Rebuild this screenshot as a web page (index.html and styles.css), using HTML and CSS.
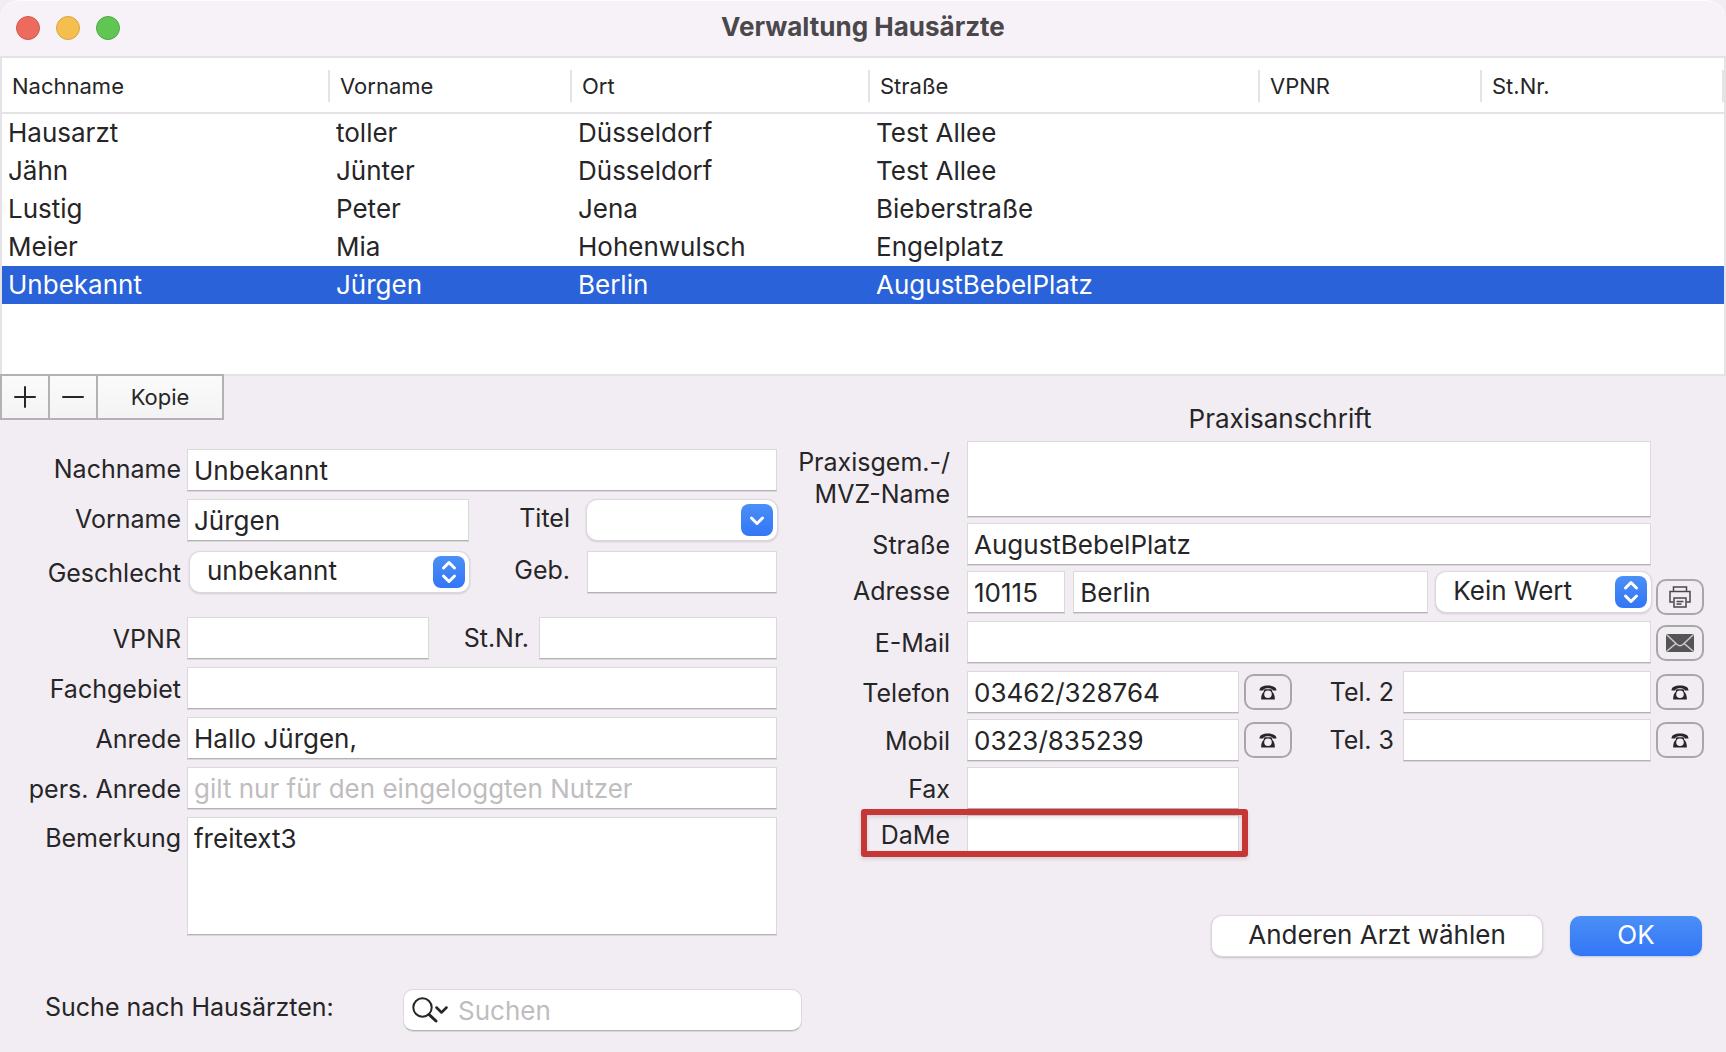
FILE: index.html
```html
<!DOCTYPE html>
<html lang="de">
<head>
<meta charset="utf-8">
<meta name="viewport" content="width=device-width, initial-scale=1">
<title>Verwaltung Hausärzte</title>
<link rel="stylesheet" href="styles.css">
</head>
<body>
<svg class="sprite" aria-hidden="true">
  <symbol id="phone" viewBox="0 0 18 15">
    <path d="M0.500 5.500C0.500 2 4 .6 9 .6s8.500 1.400 8.500 4.900h-4V4.600C12.600 3.500 11 3.200 9 3.200s-3.600.3-4.500 1.400v.9h-4z" fill="currentColor"/>
    <path fill-rule="evenodd" d="M5.300 4.200h7.400l.4 2.200c1.500 1.400 2.400 3.400 2.700 6v2.200H2.200v-2.200c.3-2.600 1.200-4.600 2.700-6zM9 5.500a3.800 3.800 0 1 0 0 7.600 3.800 3.800 0 0 0 0-7.600z" fill="currentColor"/>
  </symbol>
  <symbol id="updown" viewBox="0 0 32 32">
    <path d="M10.500 12l5.500-5.500 5.500 5.500M10.500 20l5.500 5.500 5.500-5.500" fill="none" stroke="#fff" stroke-width="3" stroke-linecap="round" stroke-linejoin="round"/>
  </symbol>
  <symbol id="down" viewBox="0 0 32 32">
    <path d="M10.500 14l5.500 5.500 5.500-5.500" fill="none" stroke="#fff" stroke-width="3" stroke-linecap="round" stroke-linejoin="round"/>
  </symbol>
</svg>
<div class="window">
  <header class="titlebar">
    <div class="lights">
      <button class="light light-close" type="button" aria-label="Schließen"></button>
      <button class="light light-min" type="button" aria-label="Minimieren"></button>
      <button class="light light-max" type="button" aria-label="Maximieren"></button>
    </div>
    <h1 class="title">Verwaltung Hausärzte</h1>
  </header>

  <div class="list">
    <table class="doctors">
      <colgroup><col class="c1"><col class="c2"><col class="c3"><col class="c4"><col class="c5"><col class="c6"></colgroup>
      <thead>
        <tr>
          <th scope="col"><span>Nachname</span></th>
          <th scope="col"><span>Vorname</span></th>
          <th scope="col"><span>Ort</span></th>
          <th scope="col"><span>Straße</span></th>
          <th scope="col"><span>VPNR</span></th>
          <th scope="col"><span>St.Nr.</span></th>
        </tr>
      </thead>
      <tbody>
        <tr><td>Hausarzt</td><td>toller</td><td>Düsseldorf</td><td>Test Allee</td><td></td><td></td></tr>
        <tr><td>Jähn</td><td>Jünter</td><td>Düsseldorf</td><td>Test Allee</td><td></td><td></td></tr>
        <tr><td>Lustig</td><td>Peter</td><td>Jena</td><td>Bieberstraße</td><td></td><td></td></tr>
        <tr><td>Meier</td><td>Mia</td><td>Hohenwulsch</td><td>Engelplatz</td><td></td><td></td></tr>
        <tr class="selected"><td>Unbekannt</td><td>Jürgen</td><td>Berlin</td><td>AugustBebelPlatz</td><td></td><td></td></tr>
      </tbody>
    </table>
  </div>

  <main class="panels">
    <section class="panel-left">
      <div class="toolbar">
        <button class="tool" type="button" aria-label="Hinzufügen"><svg width="22" height="22" viewBox="0 0 22 22"><path d="M11 1v20M1 11h20" stroke="currentColor" stroke-width="2" stroke-linecap="round"/></svg></button>
        <button class="tool" type="button" aria-label="Entfernen"><svg width="22" height="22" viewBox="0 0 22 22"><path d="M1 11h20" stroke="currentColor" stroke-width="2" stroke-linecap="round"/></svg></button>
        <button class="tool tool-wide" type="button">Kopie</button>
      </div>

      <form class="person">
        <label class="label raised" for="nachname">Nachname</label>
        <input class="field" id="nachname" value="Unbekannt">

        <label class="label raised" for="vorname">Vorname</label>
        <div class="line">
          <input class="field" id="vorname" value="Jürgen">
          <label class="label raised" for="titel">Titel</label>
          <div class="select">
            <select id="titel"><option></option></select>
            <svg class="knob"><use href="#down"/></svg>
          </div>
        </div>

        <label class="label" for="geschlecht">Geschlecht</label>
        <div class="line">
          <div class="select popup">
            <select id="geschlecht"><option>unbekannt</option></select>
            <svg class="knob"><use href="#updown"/></svg>
          </div>
          <label class="label raised" for="geb">Geb.</label>
          <input class="field" id="geb">
        </div>

        <label class="label" for="vpnr">VPNR</label>
        <div class="line ids">
          <input class="field" id="vpnr">
          <label class="label" for="stnr">St.Nr.</label>
          <input class="field" id="stnr">
        </div>

        <label class="label" for="fach">Fachgebiet</label>
        <input class="field" id="fach">

        <label class="label" for="anrede">Anrede</label>
        <input class="field" id="anrede" value="Hallo Jürgen,">

        <label class="label" for="pers">pers. Anrede</label>
        <input class="field" id="pers" placeholder="gilt nur für den eingeloggten Nutzer">

        <label class="label top" for="bem">Bemerkung</label>
        <textarea class="field" id="bem">freitext3</textarea>
      </form>

      <form class="search" role="search">
        <label class="search-label" for="suche">Suche nach Hausärzten:</label>
        <div class="searchbox">
          <svg class="glass" viewBox="0 0 36 26"><circle cx="10.500" cy="10.500" r="9.200" fill="none" stroke="currentColor" stroke-width="2"/><path d="M17 17.500l7 6.500" stroke="currentColor" stroke-width="3" stroke-linecap="round"/><path d="M24.500 10.500l5 5 5-5" fill="none" stroke="currentColor" stroke-width="2.500" stroke-linecap="round" stroke-linejoin="round"/></svg>
          <input id="suche" type="search" placeholder="Suchen">
        </div>
      </form>
    </section>

    <section class="panel-right">
      <h2 class="heading">Praxisanschrift</h2>
      <form class="address">
        <label class="label top" for="praxis">Praxisgem.-/<br>MVZ-Name</label>
        <textarea class="field" id="praxis"></textarea>

        <label class="label" for="strasse">Straße</label>
        <input class="field" id="strasse" value="AugustBebelPlatz">

        <label class="label raised" for="plz">Adresse</label>
        <div class="line place">
          <input class="field" id="plz" value="10115">
          <input class="field" id="ort" value="Berlin" aria-label="Ort">
          <div class="select">
            <select id="wert" aria-label="Wert"><option>Kein Wert</option></select>
            <svg class="knob"><use href="#updown"/></svg>
          </div>
        </div>
        <button class="icon low" type="button" aria-label="Drucken"><svg width="22" height="22" viewBox="0 0 22 22" fill="none" stroke="#4a484b" stroke-width="1.500"><path d="M4.500 5V1h13v4M4.500 16H1V5.500h20V16h-3.500"/><path d="M5 12h12v9H5zM7.500 15.500h7M7.500 18h5"/></svg></button>

        <label class="label" for="mail">E-Mail</label>
        <input class="field" id="mail">
        <button class="icon" type="button" aria-label="E-Mail senden"><svg width="28" height="18" viewBox="0 0 28 18"><rect width="28" height="18" rx="2" fill="#555556"/><path d="M1 1l10 9.500q3 2.500 6 0L27 1M1 17l9.500-8M27 17l-9.500-8" fill="none" stroke="#cfccd0" stroke-width="1.500"/></svg></button>

        <label class="label" for="tel">Telefon</label>
        <div class="line phones">
          <input class="field" id="tel" value="03462/328764">
          <button class="icon" type="button" aria-label="Telefon anrufen"><svg class="phone"><use href="#phone"/></svg></button>
          <label class="label" for="tel2">Tel. 2</label>
          <input class="field" id="tel2">
        </div>
        <button class="icon" type="button" aria-label="Tel. 2 anrufen"><svg class="phone"><use href="#phone"/></svg></button>

        <label class="label" for="mobil">Mobil</label>
        <div class="line phones">
          <input class="field" id="mobil" value="0323/835239">
          <button class="icon" type="button" aria-label="Mobil anrufen"><svg class="phone"><use href="#phone"/></svg></button>
          <label class="label" for="tel3">Tel. 3</label>
          <input class="field" id="tel3">
        </div>
        <button class="icon" type="button" aria-label="Tel. 3 anrufen"><svg class="phone"><use href="#phone"/></svg></button>

        <label class="label" for="fax">Fax</label>
        <div class="line phones"><input class="field" id="fax"></div>

        <label class="label raised" for="dame">DaMe</label>
        <div class="line phones marked"><input class="field" id="dame"><span class="callout"></span></div>
      </form>
      <div class="actions">
        <button class="push" type="button">Anderen Arzt wählen</button>
        <button class="push primary" type="button">OK</button>
      </div>
    </section>
  </main>
</div>
</body>
</html>
```
FILE: styles.css
```css
* { box-sizing: border-box; }

body {
  margin: 0;
  background: #f2edf3;
  color: #262527;
  font: 26px/32px Inter, "Liberation Sans", sans-serif;
}

button, input, select, textarea { font: inherit; color: inherit; margin: 0; }
.sprite { display: none; }

.window { min-height: 100vh; display: flex; flex-direction: column; }

/* Title bar */
.titlebar {
  display: grid;
  grid-template-columns: 1fr auto 1fr;
  align-items: center;
  height: 58px;
  padding: 0 16px;
  background: #f7f2f8;
  border-bottom: 2px solid #e5e3e5;
  border-radius: 20px 20px 0 0;
  box-shadow: inset 0 1px #fdfbfd;
}
.lights { display: flex; gap: 16px; }
.light { width: 24px; height: 24px; padding: 0; border: 1px solid; border-radius: 50%; }
.light-close { background: #ec6a5e; border-color: #d5574c; }
.light-min { background: #f5bf4f; border-color: #d9a441; }
.light-max { background: #61c554; border-color: #50a945; }
.title { margin: 0; padding-bottom: 2px; font-size: 26px; font-weight: 700; color: #4b484c; }

/* Doctor list */
.list {
  min-height: 318px;
  background: #fff;
  border: 2px solid #e5e3e5;
  border-top: 0;
}
.doctors { width: 100%; border-collapse: separate; border-spacing: 0; table-layout: fixed; }
.c1 { width: 328px; }
.c2 { width: 242px; }
.c3 { width: 298px; }
.c4 { width: 390px; }
.c5 { width: 222px; }
.c6 { width: 242px; }
.doctors th {
  height: 56px;
  padding: 2px 0 0;
  border-bottom: 2px solid #e5e3e5;
  font-size: 22px;
  font-weight: 400;
  text-align: left;
}
.doctors th span { display: block; padding-left: 10px; border-right: 2px solid #e5e3e5; }
.doctors td { height: 38px; padding: 0 6px; white-space: nowrap; }
.selected { background: #2962d9; color: #fff; }

/* Form panels */
.panels {
  display: grid;
  grid-template-columns: minmax(0, 777fr) minmax(0, 908fr);
  gap: 19px;
  padding-right: 22px;
}

.toolbar { display: flex; margin-top: -2px; }
.tool {
  display: flex;
  align-items: center;
  justify-content: center;
  width: 50px;
  height: 46px;
  padding: 0;
  border: 2px solid #b3b1b4;
  background: linear-gradient(#fbfbfb, #f3f3f3);
  font-size: 22px;
}
.tool + .tool { margin-left: -2px; }
.tool-wide { width: 128px; }

.person, .address { display: grid; align-items: start; }
.person {
  grid-template-columns: 181px minmax(0, 1fr);
  grid-template-rows: 42px 44px 58px 42px 42px 42px 42px 118px;
  gap: 8px 6px;
  margin-top: 29px;
}
.label { font-size: 25px; text-align: right; white-space: nowrap; line-height: 44px; }
.raised { padding-bottom: 4px; line-height: 40px; }
.top { padding-top: 5px; line-height: 32px; }

.field {
  width: 100%;
  min-width: 0;
  height: 42px;
  padding: 0 6px;
  border: 1px solid #dcd9dd;
  border-bottom-color: #b3b1b4;
  border-radius: 0;
  background: #fff;
  box-shadow: 0 1px #dad7db;
  outline: 0;
}
textarea.field { display: block; height: 100%; padding-top: 5px; resize: none; }
::placeholder { color: #bfbdc0; opacity: 1; }

.line { display: grid; grid-template-columns: 282fr 100fr 190fr; grid-template-rows: 42px; align-items: center; column-gap: 9px; }
.line .label { padding-right: 8px; }
.ids { grid-template-columns: 242fr 98fr 238fr; column-gap: 6px; }
.line.ids .label, .line.phones .label { padding-right: 4px; }

.select { position: relative; }
.select select {
  display: block;
  width: 100%;
  height: 40px;
  padding: 0 40px 3px 17px;
  border: 0;
  border-radius: 10px;
  appearance: none;
  background: #fff;
  box-shadow: 0 0 1px 1px #dcd9dd, 0 1px 2px 1px #cfccd0;
}
.popup { margin-left: 3px; }
.knob {
  position: absolute;
  top: 4px;
  right: 4px;
  width: 32px;
  height: 32px;
  border-radius: 8px;
  background: linear-gradient(#4b8ff7, #3276f6);
  pointer-events: none;
}

/* Search */
.search { display: grid; grid-template-columns: 358px 399px; align-items: center; margin: 54px 0 20px 45px; }
.search-label { padding-bottom: 6px; font-size: 25px; }
.searchbox { position: relative; }
.searchbox input {
  display: block;
  width: 100%;
  height: 42px;
  padding: 0 10px 0 54px;
  border: 1px solid #dcd9dd;
  border-bottom-color: #b3b1b4;
  border-radius: 10px;
  appearance: none;
  background: #fff;
  box-shadow: 0 1px #dad7db;
  outline: 0;
}
.glass { position: absolute; top: 8px; left: 9px; width: 36px; height: 26px; }

/* Practice address */
.heading { margin: 27px 0 6px; padding-left: 60px; font-size: 26px; font-weight: 400; text-align: center; }
.address {
  grid-template-columns: 154px minmax(0, 1fr) 48px;
  grid-template-rows: 76px 42px 44px 44px 42px 42px 42px 38px;
  gap: 6px 5px;
}
.address > .label { grid-column: 1; }
.address > .field, .address > .line { grid-column: 2; margin-left: 12px; width: auto; }
.place { grid-template-columns: 98fr 354fr 214fr; column-gap: 8px; }
.phones { grid-template-columns: 272fr 48px 101fr 248fr; column-gap: 5px; }
.icon {
  display: flex;
  align-items: center;
  justify-content: center;
  align-self: center;
  width: 48px;
  height: 36px;
  padding: 0;
  border: 2px solid #a9a6aa;
  border-radius: 10px;
  background: none;
}
.low { align-self: end; }
.phone { width: 18px; height: 15px; }

/* Red callout laid over the DaMe row */
.marked { position: relative; grid-template-rows: 38px; }
.marked .field { height: 38px; }
.callout {
  position: absolute;
  top: -6px;
  left: -106px;
  width: 387px;
  height: 48px;
  border: 6px solid #c53635;
  border-radius: 3px;
  box-shadow: 0 2px 4px #0002, inset 0 2px 4px #0002;
  pointer-events: none;
}

.actions { display: flex; justify-content: flex-end; gap: 28px; margin-top: 63px; padding-right: 2px; }
.push {
  width: 330px;
  height: 40px;
  padding: 0 0 2px;
  border: 0;
  border-radius: 10px;
  background: #fff;
  box-shadow: 0 0 1px 1px #dcd9dd, 0 1px 2px 1px #c6c3c7;
}
.primary { width: 132px; background: linear-gradient(#4b8ff7, #3276f6); color: #fff; box-shadow: 0 1px 2px #b9c6e8; }
```
